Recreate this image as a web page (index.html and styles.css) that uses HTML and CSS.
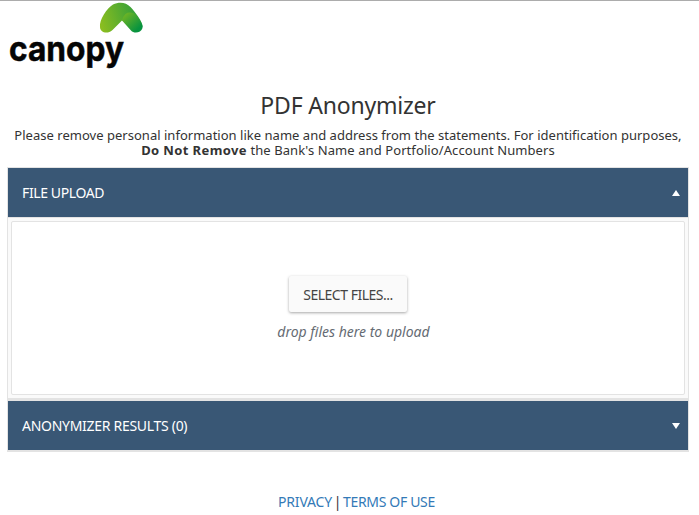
FILE: index.html
```
<!DOCTYPE html>
<html lang="en">
<head>
<meta charset="utf-8">
<title>PDF Anonymizer</title>
<link rel="stylesheet" href="styles.css">
</head>
<body>
<header class="brand">
<svg class="logo" width="160" height="80" viewBox="0 0 160 80" role="img" aria-label="canopy">
<defs>
<linearGradient id="leaf" x1="0" y1="0.6" x2="1" y2="0.4"><stop offset="0" stop-color="#8abd20"/><stop offset="1" stop-color="#289b3c"/></linearGradient>
<linearGradient id="fold" x1="0" y1="0" x2="0.8" y2="0.8"><stop offset="0" stop-color="#7fb920"/><stop offset="1" stop-color="#07933f"/></linearGradient>
</defs>
<path fill="url(#leaf)" d="M100 27C99 20 107 8 113 4.500C119 1.500 126 2 130.500 7C135 12 143 22 142.500 27L122 20.500L112.500 30C107 35 100 32 100 27Z"/>
<path fill="url(#fold)" d="M122 20.500C123 17 125 13 129 12.500C135 12 137 16 139 19C142 23 143 26 142.500 28C141 33 134 34 131 30.500Z"/>
<text class="logo-text" x="9" y="60.500" textLength="115" lengthAdjust="spacingAndGlyphs">canopy</text>
</svg>
</header>
<main>
<h1>PDF Anonymizer</h1>
<p class="intro"><span class="line-one">Please remove personal information like name and address from the statements. For identification purposes,</span><br><span class="line-two"><b>Do Not Remove</b> the Bank's Name and Portfolio/Account Numbers</span></p>
<section class="panel">
<div class="bar"><span class="upload-title">FILE UPLOAD</span><svg width="8" height="6"><path d="M0 6L4 0L8 6Z" fill="#fff"/></svg></div>
<div class="content"><div class="dropzone">
<button class="select"><span>SELECT FILES...</span></button>
<em class="hint">drop files here to upload</em>
</div></div>
<div class="bar"><span class="results-title">ANONYMIZER RESULTS (0)</span><svg width="8" height="6"><path d="M0 0H8L4 6Z" fill="#fff"/></svg></div>
</section>
</main>
<footer><a class="privacy">PRIVACY</a><span class="divider">|</span><a class="terms">TERMS OF USE</a></footer>
</body>
</html>
```
FILE: styles.css
```
* { box-sizing: border-box; }
body { margin: 0; height: 515px; overflow: hidden; border-top: 1px solid #acacac; background: #fff; color: #333; font: 14px/15px "Noto Sans", "Open Sans", sans-serif; }
.brand { height: 91px; }
.logo { display: block; margin-top: -1px; }
.logo-text { font: 700 35px Inter, sans-serif; fill: #050505; stroke: #050505; stroke-width: .5px; }
main { width: 682px; margin-left: 7px; }
h1 { margin: 0; height: 37px; line-height: 28px; font-size: 23px; font-weight: 400; letter-spacing: -.2px; text-align: center; white-space: nowrap; }
.intro { margin: 0; height: 39px; font-size: 13px; text-align: center; white-space: nowrap; }
.line-one { letter-spacing: .02px; }
.line-two { letter-spacing: .09px; }
.line-two b { letter-spacing: .38px; }
.panel { border: 1px solid #e3e3e3; border-bottom-width: 2px; }
.bar { height: 49px; padding: 0 8px 0 14px; display: flex; align-items: center; justify-content: space-between; background: #395775; color: #fff; font-size: 14px; }
.upload-title { letter-spacing: -.38px; }
.results-title { letter-spacing: -.29px; }
.content { height: 184px; padding: 3px; background: #fafafa; border-top: 1px solid #e3e3e3; border-bottom: 3px solid #e3e3e3; }
.dropzone { height: 174px; background: #fff; border: 1px solid #e3e3e3; border-radius: 2px; display: flex; flex-direction: column; align-items: center; padding-top: 54px; }
.select { width: 118px; height: 36px; padding: 0; border: 0; border-radius: 2px; background: #fafafa; color: #444; font: 14px "Noto Sans", sans-serif; letter-spacing: -.5px; white-space: nowrap; box-shadow: 0 1px 3px rgba(0,0,0,.35); }
.hint { margin-top: 12px; margin-left: 11px; color: #656b73; font-size: 14px; }
footer { display: flex; margin: 42px 0 0 278px; color: #333; white-space: nowrap; }
footer a { color: #337ab7; font-size: 14px; }
.privacy { width: 54px; letter-spacing: -.18px; }
.divider { width: 11px; text-align: center; }
.terms { letter-spacing: -.33px; }
```
